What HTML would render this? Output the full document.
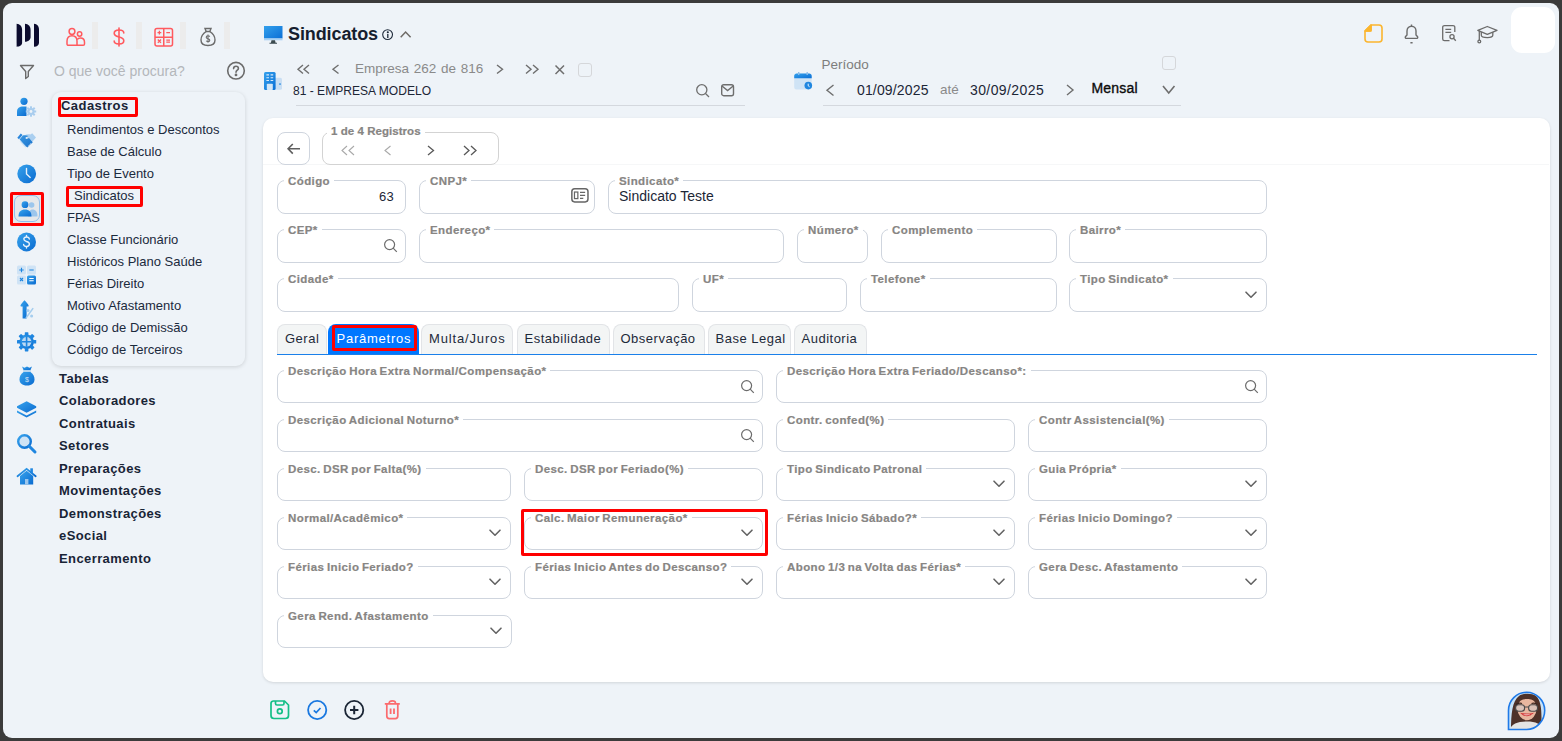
<!DOCTYPE html><html><head><meta charset="utf-8"><style>
*{box-sizing:border-box;margin:0;padding:0}
html,body{width:1562px;height:741px;overflow:hidden;background:#3b3b3b;font-family:"Liberation Sans",sans-serif}
#frame{position:absolute;left:3px;top:3px;width:1556px;height:735px;background:#eef3f8;border-radius:9px}
.a{position:absolute}
.t{position:absolute;white-space:nowrap;line-height:1}
svg{position:absolute;overflow:visible}
.sep{position:absolute;top:22px;width:6px;height:27px;background:#ececec}
#menu{position:absolute;left:52px;top:92px;width:193px;height:274px;border-radius:9px;background:#eef3f8;box-shadow:0 1px 4px rgba(0,0,0,.14)}
.mi{position:absolute;left:67px;font-size:13px;color:#1b2a3d;white-space:nowrap;line-height:1}
.mb{position:absolute;left:59px;font-size:13px;font-weight:bold;color:#182436;white-space:nowrap;line-height:1;letter-spacing:.4px}
.rb{position:absolute;border:3px solid #ff0000;border-radius:2px}
#card{position:absolute;left:263px;top:118px;width:1287px;height:564px;background:#fff;border-radius:10px;box-shadow:0 1px 3px rgba(0,0,0,.12)}
.f{position:absolute;border:1px solid #cfd5de;border-radius:8px;background:#fff}
.lb{position:absolute;top:-6px;left:6px;padding:0 4px;background:#fff;font-size:11.5px;font-weight:bold;color:#878583;white-space:nowrap;line-height:12px;letter-spacing:.4px;word-spacing:-1px;-webkit-text-stroke:.2px #878583}
.tab{position:absolute;top:324px;height:30px;background:#f3f5f5;border:1px solid #e2e4e7;border-bottom:none;border-radius:8px 8px 0 0;font-size:13px;color:#1e2a3a;line-height:28px;padding-left:7px;white-space:nowrap;letter-spacing:.5px}
</style></head><body>
<div id="frame"></div>
<svg width="30" height="30" style="left:14px;top:21px" viewBox="0 0 30 30"><path d="M2.6 2.8 C6 3 8.1 5.5 8.1 9 V21.5 C8.1 24 6 25.7 2.6 25.7 Z" fill="#0b0b2e"/><path d="M11 2.8 C14.4 3 16.6 5.5 16.6 9 V16 C16.6 18.7 14.4 20.6 11 20.8 Z" fill="#0b0b2e"/><path d="M20 2.8 C23.4 3 25 5.5 25 9 V21.5 C25 24 23.4 25.7 20 25.7 Z" fill="#0b0b2e"/></svg>
<div class="sep" style="left:92px"></div>
<div class="sep" style="left:136px"></div>
<div class="sep" style="left:180px"></div>
<div class="sep" style="left:224px"></div>
<svg width="20" height="20" style="left:66px;top:27px" viewBox="0 0 20 20" fill="none" stroke="#ff5a5f" stroke-width="1.5"><circle cx="6" cy="4.5" r="2.9"/><path d="M1 17 V14 C1 10.5 3 8.7 6 8.7 C9 8.7 11 10.5 11 14 V18.3 H2.3 C1.6 18.3 1 17.7 1 17 Z"/><circle cx="13.6" cy="7" r="2.2"/><path d="M11 18.3 H17.2 C17.9 18.3 18.5 17.7 18.5 17 V15.3 C18.5 12.6 16.8 11 14.5 11 C13 11 11.8 11.6 11.2 12.6"/></svg>
<svg width="14" height="20" style="left:112px;top:27px" viewBox="0 0 14 20" fill="none" stroke="#ff5a5f" stroke-width="1.6" stroke-linecap="round"><path d="M7 1 V19"/><path d="M11.8 6 C11.8 4 9.8 3 7 3 C4.2 3 2.2 4.3 2.2 6.3 C2.2 8.5 4.3 9.3 7 10 C9.7 10.7 11.8 11.5 11.8 13.7 C11.8 15.8 9.8 17 7 17 C4.2 17 2.2 16 2.2 14"/></svg>
<svg width="20" height="20" style="left:154px;top:27px" viewBox="0 0 20 20" fill="none" stroke="#ff5a5f" stroke-width="1.5"><rect x="1" y="1.5" width="17.5" height="17.5" rx="2"/><path d="M9.75 1.5V19 M1 10.25H18.5"/><path d="M5.4 3.8V7.6 M3.5 5.7H7.3 M12.3 5.7H16 M3.8 12.5L7 15.7 M7 12.5L3.8 15.7 M12.3 13.1H16 M12.3 15.1H16" stroke-width="1.3"/></svg>
<svg width="16" height="20" style="left:200px;top:27px" viewBox="0 0 16 20" fill="none" stroke="#6b6b6b" stroke-width="1.4"><path d="M5 1.5 H11 L9.8 4.5 H6.2 Z"/><path d="M6.2 4.5 C3 6.5 1 9.5 1 13 C1 16.5 3.5 18.5 8 18.5 C12.5 18.5 15 16.5 15 13 C15 9.5 13 6.5 9.8 4.5"/><path d="M9.8 9.6 C9.4 9 8.7 8.8 8 8.8 C7 8.8 6.2 9.4 6.2 10.2 C6.2 11.2 7.2 11.5 8 11.7 C8.9 11.9 9.8 12.2 9.8 13.2 C9.8 14 9 14.6 8 14.6 C7.2 14.6 6.5 14.3 6.2 13.8 M8 7.6V15.8" stroke-width="1.1"/></svg>
<svg width="16" height="16" style="left:19px;top:64px" viewBox="0 0 16 16" fill="none" stroke="#6b6b6b" stroke-width="1.4" stroke-linejoin="round"><path d="M1.5 1.5 H14.5 L9.3 7.5 V12.5 L6.7 14.5 V7.5 Z"/></svg>
<div class="t" style="left:54px;top:64px;font-size:14px;color:#b4b7bb">O que você procura?</div>
<svg width="20" height="20" style="left:226px;top:61px" viewBox="0 0 20 20" fill="none" stroke="#6b6b6b" stroke-width="1.6"><circle cx="10" cy="9.7" r="8.3"/><path d="M7.6 7.6 C7.6 6.1 8.7 5.2 10 5.2 C11.4 5.2 12.4 6.1 12.4 7.4 C12.4 9.1 10 9.3 10 11.3" stroke-linecap="round"/><circle cx="10" cy="13.9" r="0.6" fill="#6b6b6b"/></svg>
<svg width="20" height="20" style="left:17px;top:97px" viewBox="0 0 20 20"><defs><linearGradient id="g1" x1="0" y1="0" x2="1" y2="1"><stop offset="0" stop-color="#38a3ec"/><stop offset="1" stop-color="#0a6bd0"/></linearGradient></defs><circle cx="7" cy="4.3" r="3.6" fill="url(#g1)"/><path d="M0 19 V14.5 C0 11 2.5 9.5 6 9.5 H9.5 L9.5 19 Z" fill="url(#g1)"/><g transform="translate(14,14.5)" fill="#a9cdee"><circle r="3.6"/><g fill="#a9cdee"><rect x="-1" y="-5.2" width="2" height="2.4" transform="rotate(0)"/><rect x="-1" y="-5.2" width="2" height="2.4" transform="rotate(45)"/><rect x="-1" y="-5.2" width="2" height="2.4" transform="rotate(90)"/><rect x="-1" y="-5.2" width="2" height="2.4" transform="rotate(135)"/><rect x="-1" y="-5.2" width="2" height="2.4" transform="rotate(180)"/><rect x="-1" y="-5.2" width="2" height="2.4" transform="rotate(225)"/><rect x="-1" y="-5.2" width="2" height="2.4" transform="rotate(270)"/><rect x="-1" y="-5.2" width="2" height="2.4" transform="rotate(315)"/></g><circle r="1.4" fill="#eef3f8"/></g></svg>
<svg width="20" height="15" style="left:17px;top:133px" viewBox="0 0 20 15"><defs><linearGradient id="g2" x1="0" y1="0" x2="1" y2="1"><stop offset="0" stop-color="#3a98e2"/><stop offset="1" stop-color="#1a72cc"/></linearGradient></defs><path d="M7.5 2.3 C9.5 1.2 11.5 1 13.5 1.6 L15.2 0.3 L19 4.6 L15.5 8.6 Z" fill="#aacff0"/><path d="M2.5 8 L6 12 L8.5 14.5 L10 13 L7 9.5 Z" fill="#c2dcf3"/><path d="M0.3 4.8 L3.8 0.6 L5.5 2 L2 6.2 Z" fill="#2a86dc"/><path d="M2.6 6.4 L5.8 2.4 C7.8 2 9.6 2.3 11.5 3 L8.6 4.6 C8.3 5.5 9 6.1 9.9 5.8 L12 5.1 L15.8 9.3 L10.3 14.4 L9.2 13.4 Z" fill="url(#g2)"/><path d="M11.3 13.2 L12.7 11.8 M12.5 11.8 L14 10.4" stroke="#eef3f8" stroke-width=".7"/></svg>
<svg width="20" height="20" style="left:17px;top:164px" viewBox="0 0 20 20"><defs><linearGradient id="g3" x1="0" y1="0" x2="1" y2="1"><stop offset="0" stop-color="#38a3ec"/><stop offset="1" stop-color="#0a6bd0"/></linearGradient></defs><circle cx="9.7" cy="9.8" r="9.4" fill="url(#g3)"/><path d="M9.5 4.5 V10 L13.2 13.4" stroke="#e6f1fb" stroke-width="1.4" fill="none" stroke-linecap="round"/></svg>
<div class="rb" style="left:10px;top:192px;width:34px;height:34px"></div>
<div class="a" style="left:13px;top:195px;width:28px;height:28px;background:#e5e7e9"></div>
<div class="a" style="left:14px;top:195px;width:26px;height:27px;border:1px solid #8fc0ee;border-radius:7px;background:#e6e8ea"></div>
<svg width="20" height="16" style="left:18px;top:201px" viewBox="0 0 20 16"><defs><linearGradient id="g4" x1="0" y1="0" x2="1" y2="1"><stop offset="0" stop-color="#38a3ec"/><stop offset="1" stop-color="#0a6bd0"/></linearGradient></defs><circle cx="13.6" cy="4" r="2.8" fill="#9cc6ec"/><path d="M10 15.5 C10 10.5 12 8.5 14.6 8.5 C17.5 8.5 19.5 10.5 19.5 15.5 Z" fill="#9cc6ec"/><circle cx="7" cy="3.7" r="3.4" fill="url(#g4)"/><path d="M0.5 15.5 C0.5 10.5 3 8.5 7 8.5 C11 8.5 13.5 10.5 13.5 15.5 Z" fill="url(#g4)"/></svg>
<svg width="20" height="20" style="left:17px;top:232px" viewBox="0 0 20 20"><defs><linearGradient id="g5" x1="0" y1="0" x2="1" y2="1"><stop offset="0" stop-color="#38a3ec"/><stop offset="1" stop-color="#0a6bd0"/></linearGradient></defs><circle cx="9.5" cy="9.9" r="9.5" fill="url(#g5)"/><path d="M12.3 7 C12.1 5.7 11 5 9.5 5 C7.9 5 6.8 5.9 6.8 7.1 C6.8 8.6 8.3 9.1 9.5 9.5 C10.8 9.9 12.4 10.4 12.4 12.1 C12.4 13.5 11.1 14.5 9.5 14.5 C7.9 14.5 6.8 13.7 6.6 12.5 M9.5 3.5V5 M9.5 14.5V16" stroke="#e8f2fb" stroke-width="1.4" fill="none" stroke-linecap="round"/></svg>
<svg width="20" height="20" style="left:17px;top:265px" viewBox="0 0 20 20"><defs><linearGradient id="g6" x1="0" y1="0" x2="1" y2="1"><stop offset="0" stop-color="#38a3ec"/><stop offset="1" stop-color="#0a6bd0"/></linearGradient></defs><rect x="0" y="0.5" width="9" height="9" rx="1.5" fill="#cfe3f5"/><rect x="10" y="0.5" width="9" height="9" rx="1.5" fill="#cfe3f5"/><rect x="0" y="10.5" width="9" height="9" rx="1.5" fill="#cfe3f5"/><rect x="10" y="10.5" width="9" height="9" rx="1.5" fill="url(#g6)"/><path d="M4.5 2.8V7.2 M2.3 5H6.7 M12.3 5H16.7 M3 13L6 16 M6 13L3 16" stroke="#1f86e0" stroke-width="1.1"/><path d="M12.3 13.5H16.7 M12.3 15.8H16.7" stroke="#fff" stroke-width="1.1"/></svg>
<svg width="14" height="19" style="left:19.5px;top:299.5px" viewBox="0 0 14 19"><defs><linearGradient id="g7" x1="0" y1="0" x2="1" y2="1"><stop offset="0" stop-color="#38a3ec"/><stop offset="1" stop-color="#0a6bd0"/></linearGradient></defs><path d="M4.5 0.3 C6 1.8 8.3 4.2 8.6 5.4 C8.8 6.2 8.2 6.6 7.4 6.6 H6.6 V18.6 H2.6 V6.6 H1.7 C0.8 6.6 0.3 6.1 0.5 5.4 C0.9 4.2 3 1.8 4.5 0.3 Z" fill="url(#g7)"/><path d="M6.3 17.6 L12.8 8.6" stroke="#a5cdee" stroke-width="1.6" stroke-linecap="round"/><circle cx="8" cy="10.6" r="1.5" fill="#a5cdee"/><circle cx="11.6" cy="16" r="1.5" fill="#a5cdee"/></svg>
<svg width="20" height="20" style="left:17px;top:332px" viewBox="0 0 20 20"><defs><linearGradient id="g8" x1="0" y1="0" x2="1" y2="1"><stop offset="0" stop-color="#38a3ec"/><stop offset="1" stop-color="#0a6bd0"/></linearGradient></defs><g transform="translate(9.6,9.8)"><circle r="7.3" fill="url(#g8)"/><rect x="-1.8" y="-9.6" width="3.6" height="3.6" rx=".6" fill="#1f86e0" transform="rotate(0)"/><rect x="-1.8" y="-9.6" width="3.6" height="3.6" rx=".6" fill="#1f86e0" transform="rotate(45)"/><rect x="-1.8" y="-9.6" width="3.6" height="3.6" rx=".6" fill="#1f86e0" transform="rotate(90)"/><rect x="-1.8" y="-9.6" width="3.6" height="3.6" rx=".6" fill="#1f86e0" transform="rotate(135)"/><rect x="-1.8" y="-9.6" width="3.6" height="3.6" rx=".6" fill="#1f86e0" transform="rotate(180)"/><rect x="-1.8" y="-9.6" width="3.6" height="3.6" rx=".6" fill="#1f86e0" transform="rotate(225)"/><rect x="-1.8" y="-9.6" width="3.6" height="3.6" rx=".6" fill="#1f86e0" transform="rotate(270)"/><rect x="-1.8" y="-9.6" width="3.6" height="3.6" rx=".6" fill="#1f86e0" transform="rotate(315)"/><circle r="4.8" fill="#bcd9f3"/><path d="M-5 0H5 M0 -5V5" stroke="#1f86e0" stroke-width="1.6"/></g></svg>
<svg width="16" height="20" style="left:18.5px;top:366px" viewBox="0 0 16 20"><defs><linearGradient id="g9" x1="0" y1="0" x2="1" y2="1"><stop offset="0" stop-color="#38a3ec"/><stop offset="1" stop-color="#0a6bd0"/></linearGradient></defs><path d="M3 0.5 L5.5 1.8 L8 0.5 L10.5 1.8 L13 0.5 L11.5 4 H4.5 Z" fill="url(#g9)"/><rect x="4.2" y="4.3" width="7.6" height="1.4" fill="#9cc6ec"/><path d="M4.5 6 C1.5 8 0.5 11 0.5 13.5 C0.5 17 3 19.5 8 19.5 C13 19.5 15.5 17 15.5 13.5 C15.5 11 14.5 8 11.5 6 Z" fill="url(#g9)"/><text x="8" y="16" font-size="7" fill="#cfe3f5" text-anchor="middle" font-family="Liberation Sans">$</text></svg>
<svg width="20" height="17" style="left:17px;top:401px" viewBox="0 0 20 17"><defs><linearGradient id="g10" x1="0" y1="0" x2="1" y2="1"><stop offset="0" stop-color="#38a3ec"/><stop offset="1" stop-color="#0a6bd0"/></linearGradient></defs><path d="M0 9.5 L9.6 14.5 L19.2 9.5 L19.2 11.5 L9.6 16.5 L0 11.5 Z" fill="url(#g10)"/><path d="M9.6 0.3 L19.2 5.3 L19.2 6.8 L9.6 11.8 L0 6.8 L0 5.3 Z" fill="url(#g10)"/></svg>
<svg width="20" height="20" style="left:17px;top:433.5px" viewBox="0 0 20 20"><defs><linearGradient id="g11" x1="0" y1="0" x2="1" y2="1"><stop offset="0" stop-color="#38a3ec"/><stop offset="1" stop-color="#0a6bd0"/></linearGradient></defs><circle cx="7.5" cy="7.5" r="6.3" fill="#cfe3f5" stroke="url(#g11)" stroke-width="2.4"/><path d="M12 12 L18 18" stroke="#1f86e0" stroke-width="3" stroke-linecap="round"/></svg>
<svg width="20" height="17" style="left:17px;top:468px" viewBox="0 0 20 17"><defs><linearGradient id="g12" x1="0" y1="0" x2="1" y2="1"><stop offset="0" stop-color="#38a3ec"/><stop offset="1" stop-color="#0a6bd0"/></linearGradient></defs><path d="M0.5 8.2 L9.6 0.8 L18.7 8.2" stroke="url(#g12)" stroke-width="1.8" fill="none" stroke-linecap="round"/><rect x="13.3" y="0.3" width="2.6" height="5" fill="#1f86e0"/><path d="M3 8 L9.6 2.8 L16.2 8 V16.5 H3 Z" fill="url(#g12)"/><rect x="8" y="11" width="3.4" height="5.5" fill="#9cc6ec"/></svg>
<div id="menu"></div>
<div class="rb" style="left:58px;top:97px;width:80px;height:20px"></div>
<div class="t" style="left:61px;top:99.3px;font-size:13px;font-weight:bold;color:#182436;letter-spacing:.45px">Cadastros</div>
<div class="mi" style="left:67px;top:123px">Rendimentos e Descontos</div>
<div class="mi" style="left:67px;top:145px">Base de Cálculo</div>
<div class="mi" style="left:67px;top:167px">Tipo de Evento</div>
<div class="mi" style="left:74px;top:189px">Sindicatos</div>
<div class="mi" style="left:67px;top:211px">FPAS</div>
<div class="mi" style="left:67px;top:233px">Classe Funcionário</div>
<div class="mi" style="left:67px;top:255px">Históricos Plano Saúde</div>
<div class="mi" style="left:67px;top:277px">Férias Direito</div>
<div class="mi" style="left:67px;top:299px">Motivo Afastamento</div>
<div class="mi" style="left:67px;top:321px">Código de Demissão</div>
<div class="mi" style="left:67px;top:343px">Código de Terceiros</div>
<div class="rb" style="left:66px;top:186px;width:77px;height:21px"></div>
<div class="mb" style="top:371.5px">Tabelas</div>
<div class="mb" style="top:394.0px">Colaboradores</div>
<div class="mb" style="top:416.5px">Contratuais</div>
<div class="mb" style="top:439.0px">Setores</div>
<div class="mb" style="top:461.5px">Preparações</div>
<div class="mb" style="top:484.0px">Movimentações</div>
<div class="mb" style="top:506.5px">Demonstrações</div>
<div class="mb" style="top:529.0px">eSocial</div>
<div class="mb" style="top:551.5px">Encerramento</div>
<svg width="19" height="18" style="left:263.5px;top:25.5px" viewBox="0 0 19 18"><defs><linearGradient id="gm" x1="0" y1="0" x2="1" y2="1"><stop offset="0" stop-color="#33a0ec"/><stop offset="1" stop-color="#0a6fd6"/></linearGradient></defs><rect x="0" y="0" width="18.5" height="12.5" fill="url(#gm)"/><rect x="0" y="12.5" width="18.5" height="1.8" fill="#a9d2f3"/><path d="M7.5 14.3 H11 L11.6 16.8 H13 V17.8 H5.5 V16.8 H6.9 Z" fill="#3b4a4f"/></svg>
<div class="t" style="left:288px;top:24.5px;font-size:18px;font-weight:bold;color:#161e2e;letter-spacing:-.1px">Sindicatos</div>
<svg width="12" height="12" style="left:382px;top:28.5px" viewBox="0 0 12 12" fill="none" stroke="#1e2a3a" stroke-width="1.1"><circle cx="5.6" cy="5.6" r="4.9"/><path d="M5.8 5V9" stroke-width="1.3"/><circle cx="5.8" cy="3.2" r=".5" fill="#1e2a3a"/></svg>
<svg width="12" height="7" style="left:400px;top:31px" viewBox="0 0 12 7" fill="none" stroke="#6e6a66" stroke-width="1.5"><path d="M0.7 6.2 L5.6 1 L10.6 6.2"/></svg>
<svg width="18" height="18" style="left:264px;top:72px" viewBox="0 0 18 18"><defs><linearGradient id="gb" x1="0" y1="0" x2="1" y2="1"><stop offset="0" stop-color="#35a1ec"/><stop offset="1" stop-color="#0a6fd6"/></linearGradient></defs><rect x="10" y="5.8" width="8" height="12" rx="1.6" fill="#c9def3"/><rect x="0" y="0" width="11.6" height="18" rx="1.5" fill="url(#gb)"/><path d="M2.4 2.9H5 M6.6 2.9H9.2 M2.4 5.7H5 M6.6 5.7H9.2 M2.4 8.5H5 M6.6 8.5H9.2" stroke="#d9eafa" stroke-width="1.1"/><rect x="2.8" y="11.8" width="6" height="6.2" rx=".8" fill="#d3e6f7"/><rect x="15.4" y="11.2" width="1.2" height="1.8" fill="#1f86e0"/></svg>
<svg width="5" height="8.5" style="left:297.5px;top:65px" viewBox="0 0 5 8.5" fill="none" stroke="#6e6e6e" stroke-width="1.4"><path d="M5 0 L0 4.25 L5 8.5"/></svg><svg width="5" height="8.5" style="left:304px;top:65px" viewBox="0 0 5 8.5" fill="none" stroke="#6e6e6e" stroke-width="1.4"><path d="M5 0 L0 4.25 L5 8.5"/></svg>
<svg width="5.5" height="8.5" style="left:332.5px;top:65px" viewBox="0 0 5.5 8.5" fill="none" stroke="#6e6e6e" stroke-width="1.4"><path d="M5.5 0 L0 4.25 L5.5 8.5"/></svg>
<div class="t" style="left:355px;top:62px;font-size:13.5px;color:#8a8a8a;word-spacing:1px">Empresa 262 de 816</div>
<svg width="5.5" height="8.5" style="left:497px;top:65px" viewBox="0 0 5.5 8.5" fill="none" stroke="#6e6e6e" stroke-width="1.4"><path d="M0 0 L5.5 4.25 L0 8.5"/></svg>
<svg width="5" height="8.5" style="left:526px;top:65px" viewBox="0 0 5 8.5" fill="none" stroke="#6e6e6e" stroke-width="1.4"><path d="M0 0 L5 4.25 L0 8.5"/></svg><svg width="5" height="8.5" style="left:533px;top:65px" viewBox="0 0 5 8.5" fill="none" stroke="#6e6e6e" stroke-width="1.4"><path d="M0 0 L5 4.25 L0 8.5"/></svg>
<svg width="10" height="10" style="left:554.5px;top:64.5px" viewBox="0 0 10 10" fill="none" stroke="#6e6e6e" stroke-width="1.5"><path d="M0.5 0.5 L9 9 M9 0.5 L0.5 9"/></svg>
<div class="a" style="left:578px;top:63px;width:14px;height:14px;border:1px solid #d5d7da;border-radius:3px"></div>
<div class="t" style="left:293px;top:84px;font-size:13.5px;color:#1c2636;transform:scaleX(.893);transform-origin:0 0">81 - EMPRESA MODELO</div>
<div class="a" style="left:296px;top:105px;width:449px;height:1px;background:#d4d8de"></div>
<svg width="14" height="14" style="left:695.5px;top:83.5px" viewBox="0 0 14 14" fill="none" stroke="#6e6e6e" stroke-width="1.3"><circle cx="5.8" cy="5.8" r="5.1"/><path d="M9.5 9.5 L13 13"/></svg>
<svg width="14" height="13" style="left:721px;top:84px" viewBox="0 0 14 13" fill="none" stroke="#6e6e6e" stroke-width="1.4"><rect x="0.7" y="0.7" width="11.8" height="11" rx="2"/><path d="M1 2 L6.6 6.5 L12.2 2"/></svg>
<svg width="19" height="18" style="left:793.5px;top:72px" viewBox="0 0 19 18"><defs><linearGradient id="gc" x1="0" y1="0" x2="1" y2="1"><stop offset="0" stop-color="#35a1ec"/><stop offset="1" stop-color="#0a6fd6"/></linearGradient></defs><rect x="0.2" y="1.5" width="17.5" height="16" rx="2.5" fill="#cfe3f5"/><path d="M0.2 4 C0.2 2.6 1.3 1.5 2.7 1.5 H15.2 C16.6 1.5 17.7 2.6 17.7 4 V6.2 H0.2 Z" fill="url(#gc)"/><rect x="4" y="0" width="1.4" height="3" fill="#8dbde9"/><rect x="12.5" y="0" width="1.4" height="3" fill="#8dbde9"/><circle cx="14.3" cy="13.6" r="3.8" fill="#1f86e0"/><path d="M14.2 11.7 V13.8 L15.6 14.8" stroke="#fff" stroke-width=".9" fill="none"/></svg>
<div class="t" style="left:821.5px;top:58px;font-size:13.5px;color:#7d7d7d">Período</div>
<div class="a" style="left:1162px;top:56px;width:14px;height:14px;border:1px solid #d5d7da;border-radius:3px"></div>
<svg width="6.5" height="10.5" style="left:827px;top:85px" viewBox="0 0 6.5 10.5" fill="none" stroke="#6e6e6e" stroke-width="1.4"><path d="M6.5 0 L0 5.25 L6.5 10.5"/></svg>
<div class="t" style="left:857px;top:82.5px;font-size:14px;color:#1c2636;letter-spacing:.15px">01/09/2025</div>
<div class="t" style="left:940px;top:82.5px;font-size:13.5px;color:#8a8a8a">até</div>
<div class="t" style="left:970px;top:82.5px;font-size:14px;color:#1c2636;letter-spacing:.4px">30/09/2025</div>
<svg width="6" height="10" style="left:1067px;top:85px" viewBox="0 0 6 10" fill="none" stroke="#6e6e6e" stroke-width="1.4"><path d="M0 0 L6 5.0 L0 10"/></svg>
<div class="t" style="left:1091.5px;top:81px;font-size:14px;color:#0b0b0b;letter-spacing:.2px;-webkit-text-stroke:.35px #0b0b0b">Mensal</div>
<svg width="11.5" height="7" style="left:1163px;top:85.5px" viewBox="0 0 11.5 7" fill="none" stroke="#6e6e6e" stroke-width="1.6"><path d="M0 0 L5.75 7 L11.5 0"/></svg>
<div class="a" style="left:823px;top:105px;width:358px;height:1px;background:#d4d8de"></div>
<svg width="19" height="19" style="left:1363.5px;top:23.5px" viewBox="0 0 19 19" fill="none" stroke="#fbb52e" stroke-width="1.6" stroke-linejoin="round"><path d="M7 1 H15 C16.7 1 18 2.3 18 4 V15 C18 16.7 16.7 18 15 18 H4 C2.3 18 1 16.7 1 15 V7 Z"/><path d="M7 1 V5.5 C7 6.4 6.4 7 5.5 7 H1" /><path d="M1 7 L7 1 V7 Z" fill="#fbb52e"/></svg>
<svg width="14" height="20" style="left:1404.5px;top:23.5px" viewBox="0 0 14 20" fill="none" stroke="#6b6b6b" stroke-width="1.4"><path d="M6.5 0.5 V2.3 M2 11 V7 C2 4.2 4 2.3 6.5 2.3 C9 2.3 11 4.2 11 7 V11 L12.6 12.7 C13 13.5 12.5 14.4 11.6 14.4 H1.4 C0.5 14.4 0 13.5 0.4 12.7 Z M5.4 18.7 H7.6"/></svg>
<svg width="16" height="17" style="left:1441.5px;top:24.5px" viewBox="0 0 16 17" fill="none" stroke="#6b6b6b" stroke-width="1.3"><path d="M12.8 7 V2.3 C12.8 1.3 12 .6 11 .6 H2.5 C1.5 .6 .7 1.3 .7 2.3 V14 C.7 15 1.5 15.7 2.5 15.7 H7.5"/><path d="M3.4 4.3 H9.2 M3.4 7.3 H9.2"/><circle cx="10" cy="11.8" r="2.1"/><path d="M11.5 13.3 L13.8 15.8"/></svg>
<svg width="21" height="18" style="left:1477px;top:25.5px" viewBox="0 0 21 18" fill="none" stroke="#6b6b6b" stroke-width="1.3" stroke-linejoin="round"><path d="M10.3 0.5 L20 4.3 L10.3 8.3 L0.8 4.3 Z"/><path d="M4.3 6 V9.3 C4.3 10.5 6.5 11.6 10.3 11.6 C14.1 11.6 15.8 10.5 15.8 9.3 V6"/><path d="M2.3 5 V14.2"/><circle cx="2.3" cy="15.5" r="1.4"/></svg>
<div class="a" style="left:1511px;top:7px;width:44px;height:46px;background:#fff;border-radius:11px"></div>
<div id="card"></div>
<div class="a" style="left:263px;top:164px;width:1286px;height:1px;background:#f6f7f8"></div>
<div class="f" style="left:277px;top:132px;width:33px;height:33px;border-color:#cfd5de"></div>
<svg width="14" height="12" style="left:286.5px;top:143px" viewBox="0 0 14 12" fill="none" stroke="#5f5f5f" stroke-width="1.6"><path d="M13 5.8 H1.2 M5.8 1 L1.1 5.8 L5.8 10.6"/></svg>
<div class="f" style="left:322px;top:132px;width:177px;height:33px;border-color:#d3d3d3"><div class="lb" style="left:4px;top:-8.5px;padding:0 4px 0 4px;letter-spacing:.05px;word-spacing:0">1 de 4 Registros</div></div>
<svg width="5" height="9" style="left:342px;top:145.5px" viewBox="0 0 5 9" fill="none" stroke="#a9a9a9" stroke-width="1.1"><path d="M5 0 L0 4.5 L5 9"/></svg><svg width="5" height="9" style="left:348.5px;top:145.5px" viewBox="0 0 5 9" fill="none" stroke="#a9a9a9" stroke-width="1.1"><path d="M5 0 L0 4.5 L5 9"/></svg>
<svg width="5.5" height="9" style="left:385px;top:145.5px" viewBox="0 0 5.5 9" fill="none" stroke="#a9a9a9" stroke-width="1.1"><path d="M5.5 0 L0 4.5 L5.5 9"/></svg>
<svg width="5.5" height="9" style="left:428px;top:145.5px" viewBox="0 0 5.5 9" fill="none" stroke="#585858" stroke-width="1.3"><path d="M0 0 L5.5 4.5 L0 9"/></svg>
<svg width="5" height="9" style="left:464px;top:145.5px" viewBox="0 0 5 9" fill="none" stroke="#585858" stroke-width="1.3"><path d="M0 0 L5 4.5 L0 9"/></svg><svg width="5" height="9" style="left:471px;top:145.5px" viewBox="0 0 5 9" fill="none" stroke="#585858" stroke-width="1.3"><path d="M0 0 L5 4.5 L0 9"/></svg>
<div class="f" style="left:277px;top:180px;width:129px;height:34px"><div class="lb">Código</div><div class="t" style="right:11px;top:8.5px;font-size:13px;color:#1c2636;letter-spacing:.3px">63</div></div>
<div class="f" style="left:419px;top:180px;width:176px;height:34px"><div class="lb">CNPJ*</div></div><svg width="18" height="15" style="left:570.5px;top:188.3px" viewBox="0 0 19 16" fill="none" stroke="#666" stroke-width="1.6"><rect x="0.8" y="0.8" width="17.2" height="14" rx="3"/><rect x="3.6" y="4.3" width="3.6" height="7" stroke-width="1.3"/><path d="M9.5 4.6H15 M9.5 7.8H15 M9.5 11H13" stroke-width="1.2"/></svg>
<div class="f" style="left:608px;top:180px;width:659px;height:34px"><div class="lb">Sindicato*</div><div class="t" style="left:10px;top:8.0px;font-size:14px;color:#1c2636">Sindicato Teste</div></div>
<div class="f" style="left:277px;top:229px;width:129px;height:34px"><div class="lb">CEP*</div></div><svg width="14" height="14" style="left:384px;top:239px" viewBox="0 0 14 14" fill="none" stroke="#6b6b6b" stroke-width="1.2"><circle cx="5.6" cy="5.6" r="5"/><path d="M9.2 9.2 L12.8 12.8"/></svg>
<div class="f" style="left:419px;top:229px;width:365px;height:34px"><div class="lb">Endereço*</div></div>
<div class="f" style="left:797px;top:229px;width:71px;height:34px"><div class="lb">Número*</div></div>
<div class="f" style="left:881px;top:229px;width:176px;height:34px"><div class="lb">Complemento</div></div>
<div class="f" style="left:1069px;top:229px;width:198px;height:34px"><div class="lb">Bairro*</div></div>
<div class="f" style="left:277px;top:278px;width:402px;height:34px"><div class="lb">Cidade*</div></div>
<div class="f" style="left:692px;top:278px;width:155px;height:34px"><div class="lb">UF*</div></div>
<div class="f" style="left:860px;top:278px;width:197px;height:34px"><div class="lb">Telefone*</div></div>
<div class="f" style="left:1069px;top:278px;width:198px;height:34px"><div class="lb">Tipo Sindicato*</div></div><svg width="12" height="8" style="left:1244.5px;top:290.7px" viewBox="0 0 12 8" fill="none" stroke="#646464" stroke-width="1.6" stroke-linecap="round" stroke-linejoin="round"><path d="M1 1.2 L6 6.2 L11 1.2"/></svg>
<div class="tab" style="left:277px;width:50px">Geral</div>
<div class="tab" style="left:421px;width:92px"><span style="letter-spacing:.85px">Multa/Juros</span></div>
<div class="tab" style="left:516.5px;width:93px">Estabilidade</div>
<div class="tab" style="left:612.5px;width:92px">Observação</div>
<div class="tab" style="left:707.5px;width:83px">Base Legal</div>
<div class="tab" style="left:793.5px;width:73px">Auditoria</div>
<div class="a" style="left:328px;top:323.5px;width:91px;height:31px;background:#0077ff;border-radius:8px 8px 0 0"></div>
<div class="t" style="left:336.5px;top:332px;font-size:13px;color:#fff;letter-spacing:.75px">Parâmetros</div>
<div class="rb" style="left:332px;top:325px;width:85px;height:26px"></div>
<div class="a" style="left:277px;top:353.6px;width:1260px;height:1.5px;background:#1a80ea"></div>
<div class="f" style="left:277px;top:370px;width:486px;height:33px"><div class="lb">Descrição Hora Extra Normal/Compensação*</div></div><svg width="14" height="14" style="left:741px;top:380px" viewBox="0 0 14 14" fill="none" stroke="#6b6b6b" stroke-width="1.2"><circle cx="5.6" cy="5.6" r="5"/><path d="M9.2 9.2 L12.8 12.8"/></svg>
<div class="f" style="left:776px;top:370px;width:491px;height:33px"><div class="lb">Descrição Hora Extra Feriado/Descanso*:</div></div><svg width="14" height="14" style="left:1245px;top:380px" viewBox="0 0 14 14" fill="none" stroke="#6b6b6b" stroke-width="1.2"><circle cx="5.6" cy="5.6" r="5"/><path d="M9.2 9.2 L12.8 12.8"/></svg>
<div class="f" style="left:277px;top:419px;width:486px;height:33px"><div class="lb">Descrição Adicional Noturno*</div></div><svg width="14" height="14" style="left:741px;top:429px" viewBox="0 0 14 14" fill="none" stroke="#6b6b6b" stroke-width="1.2"><circle cx="5.6" cy="5.6" r="5"/><path d="M9.2 9.2 L12.8 12.8"/></svg>
<div class="f" style="left:776px;top:419px;width:239px;height:33px"><div class="lb">Contr. confed(%)</div></div>
<div class="f" style="left:1028px;top:419px;width:239px;height:33px"><div class="lb">Contr Assistencial(%)</div></div>
<div class="f" style="left:277px;top:468px;width:234px;height:33px"><div class="lb">Desc. DSR por Falta(%)</div></div>
<div class="f" style="left:524px;top:468px;width:239px;height:33px"><div class="lb">Desc. DSR por Feriado(%)</div></div>
<div class="f" style="left:776px;top:468px;width:239px;height:33px"><div class="lb">Tipo Sindicato Patronal</div></div><svg width="12" height="8" style="left:992.5px;top:480.2px" viewBox="0 0 12 8" fill="none" stroke="#646464" stroke-width="1.6" stroke-linecap="round" stroke-linejoin="round"><path d="M1 1.2 L6 6.2 L11 1.2"/></svg>
<div class="f" style="left:1028px;top:468px;width:239px;height:33px"><div class="lb">Guia Própria*</div></div><svg width="12" height="8" style="left:1244.5px;top:480.2px" viewBox="0 0 12 8" fill="none" stroke="#646464" stroke-width="1.6" stroke-linecap="round" stroke-linejoin="round"><path d="M1 1.2 L6 6.2 L11 1.2"/></svg>
<div class="f" style="left:277px;top:517px;width:234px;height:33px"><div class="lb">Normal/Acadêmico*</div></div><svg width="12" height="8" style="left:488.5px;top:529.2px" viewBox="0 0 12 8" fill="none" stroke="#646464" stroke-width="1.6" stroke-linecap="round" stroke-linejoin="round"><path d="M1 1.2 L6 6.2 L11 1.2"/></svg>
<div class="f" style="left:524px;top:517px;width:239px;height:33px"><div class="lb">Calc. Maior Remuneração*</div></div><svg width="12" height="8" style="left:740.5px;top:529.2px" viewBox="0 0 12 8" fill="none" stroke="#646464" stroke-width="1.6" stroke-linecap="round" stroke-linejoin="round"><path d="M1 1.2 L6 6.2 L11 1.2"/></svg>
<div class="f" style="left:776px;top:517px;width:239px;height:33px"><div class="lb">Férias Inicio Sábado?*</div></div><svg width="12" height="8" style="left:992.5px;top:529.2px" viewBox="0 0 12 8" fill="none" stroke="#646464" stroke-width="1.6" stroke-linecap="round" stroke-linejoin="round"><path d="M1 1.2 L6 6.2 L11 1.2"/></svg>
<div class="f" style="left:1028px;top:517px;width:239px;height:33px"><div class="lb">Férias Inicio Domingo?</div></div><svg width="12" height="8" style="left:1244.5px;top:529.2px" viewBox="0 0 12 8" fill="none" stroke="#646464" stroke-width="1.6" stroke-linecap="round" stroke-linejoin="round"><path d="M1 1.2 L6 6.2 L11 1.2"/></svg>
<div class="f" style="left:277px;top:566px;width:234px;height:33px"><div class="lb">Férias Inicio Feriado?</div></div><svg width="12" height="8" style="left:488.5px;top:578.2px" viewBox="0 0 12 8" fill="none" stroke="#646464" stroke-width="1.6" stroke-linecap="round" stroke-linejoin="round"><path d="M1 1.2 L6 6.2 L11 1.2"/></svg>
<div class="f" style="left:524px;top:566px;width:239px;height:33px"><div class="lb">Férias Inicio Antes do Descanso?</div></div><svg width="12" height="8" style="left:740.5px;top:578.2px" viewBox="0 0 12 8" fill="none" stroke="#646464" stroke-width="1.6" stroke-linecap="round" stroke-linejoin="round"><path d="M1 1.2 L6 6.2 L11 1.2"/></svg>
<div class="f" style="left:776px;top:566px;width:239px;height:33px"><div class="lb">Abono 1/3 na Volta das Férias*</div></div><svg width="12" height="8" style="left:992.5px;top:578.2px" viewBox="0 0 12 8" fill="none" stroke="#646464" stroke-width="1.6" stroke-linecap="round" stroke-linejoin="round"><path d="M1 1.2 L6 6.2 L11 1.2"/></svg>
<div class="f" style="left:1028px;top:566px;width:239px;height:33px"><div class="lb">Gera Desc. Afastamento</div></div><svg width="12" height="8" style="left:1244.5px;top:578.2px" viewBox="0 0 12 8" fill="none" stroke="#646464" stroke-width="1.6" stroke-linecap="round" stroke-linejoin="round"><path d="M1 1.2 L6 6.2 L11 1.2"/></svg>
<div class="f" style="left:277px;top:615px;width:235px;height:33px"><div class="lb">Gera Rend. Afastamento</div></div><svg width="12" height="8" style="left:489.5px;top:627.2px" viewBox="0 0 12 8" fill="none" stroke="#646464" stroke-width="1.6" stroke-linecap="round" stroke-linejoin="round"><path d="M1 1.2 L6 6.2 L11 1.2"/></svg>
<div class="rb" style="left:521px;top:509px;width:247px;height:47px"></div>
<svg width="20" height="20" style="left:269.5px;top:699.5px" viewBox="0 0 20 20" fill="none" stroke="#13bf86" stroke-width="1.7"><path d="M3.5 1 H14.5 L18.5 5 V15.5 C18.5 17.2 17.2 18.5 15.5 18.5 H4 C2.3 18.5 1 17.2 1 15.5 V3.5 C1 2.1 2.1 1 3.5 1 Z"/><path d="M5.5 1 V3.5 C5.5 4.3 6.1 5 7 5 H12.5 C13.4 5 14 4.3 14 3.5 V1"/><circle cx="9.8" cy="11.2" r="2.4"/></svg>
<svg width="21" height="21" style="left:306.5px;top:699.5px" viewBox="0 0 21 21" fill="none" stroke="#1a78e0" stroke-width="1.8"><circle cx="10.2" cy="10" r="9.1"/><path d="M6.8 10.4 L9.2 12.6 L13.5 8" stroke-width="1.7"/></svg>
<svg width="21" height="21" style="left:343.5px;top:699.5px" viewBox="0 0 21 21" fill="none" stroke="#1b2636" stroke-width="1.8"><circle cx="10.2" cy="10" r="9.1"/><path d="M10.2 5.8 V14.2 M6 10 H14.4" stroke-width="2"/></svg>
<svg width="17" height="20" style="left:384px;top:699.5px" viewBox="0 0 17 20" fill="none" stroke="#fb6b6e" stroke-width="1.7"><path d="M0.8 3.8 H15.8 M5.2 3.5 V2.8 C5.2 1.7 6.2 0.9 8.3 0.9 C10.4 0.9 11.4 1.7 11.4 2.8 V3.5 M2.8 4 V16 C2.8 17.6 3.8 18.6 5.3 18.6 H11.3 C12.8 18.6 13.8 17.6 13.8 16 V4"/><path d="M6.6 8.5 V14 M10 8.5 V14" stroke-width="1.8"/></svg>
<svg width="40" height="40" style="left:1506.5px;top:690.5px" viewBox="0 0 40 40"><defs><clipPath id="av"><path d="M1.5 38.5 V19.5 C1.5 9.3 9.5 1.3 19.6 1.3 C29.5 1.3 37.7 9.5 37.7 19.5 C37.7 29.8 29.5 38.5 19.6 38.5 Z"/></clipPath></defs><g clip-path="url(#av)"><rect width="40" height="40" fill="#c8e3f8"/><path d="M4 40 C4 24 5 10 12 5 C16 2 25 2 29 5 C35 10 35 24 34 40 Z" fill="#4e3229"/><ellipse cx="20" cy="17.5" rx="9.6" ry="11.8" fill="#e8b79f"/><path d="M9.5 14 C10 7 14 4.5 19 4.5 C25 4.5 30 7 30.5 13 C27 9 24 8 20 8 C15 8 12 10 9.5 14 Z" fill="#4e3229"/><path d="M9 13.5 C11 11.8 14 12 15 12.5 M24.5 12.5 C26 12 28.5 12 30 13.5" stroke="#3a2620" stroke-width="1.2" fill="none"/><rect x="8.6" y="13.8" width="9" height="6.5" rx="3" fill="#d9c2b8" stroke="#4a4a4a" stroke-width="1.1"/><rect x="21.6" y="13.8" width="9" height="6.5" rx="3" fill="#d9c2b8" stroke="#4a4a4a" stroke-width="1.1"/><path d="M17.6 16 H21.6" stroke="#4a4a4a" stroke-width="1"/><path d="M14.5 22.5 C17 25.5 23 25.5 25.5 22.5 C22 23.2 18 23.2 14.5 22.5 Z" fill="#fff" stroke="#d23c3c" stroke-width="1.1"/><path d="M2 40 C4 33 10 30.5 20 30.5 C29 30.5 35 33 37 40 Z" fill="#e4e4e4"/></g><path d="M1.5 38.5 V19.5 C1.5 9.3 9.5 1.3 19.6 1.3 C29.5 1.3 37.7 9.5 37.7 19.5 C37.7 29.8 29.5 38.5 19.6 38.5 Z" fill="none" stroke="#1f7ae8" stroke-width="1.6"/></svg>
</body></html>
